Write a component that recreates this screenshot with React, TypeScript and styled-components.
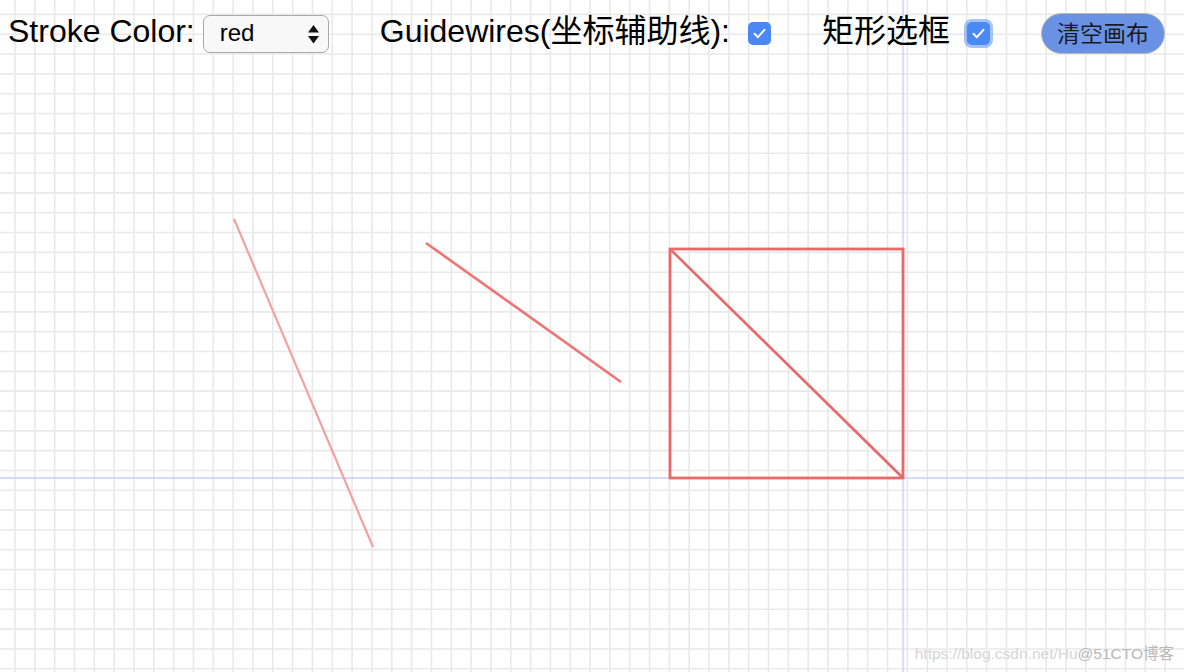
import React from "react";
import styled, { createGlobalStyle } from "styled-components";

const GlobalStyle = createGlobalStyle`
  html, body {
    margin: 0;
    padding: 0;
    background: #ffffff;
    font-family: "Liberation Sans", "Noto Sans CJK SC", sans-serif;
    color: #000;
    overflow: hidden;
  }
`;

const Page = styled.div`
  position: relative;
  width: 1184px;
  height: 672px;
  overflow: hidden;
`;

const Canvas = styled.svg`
  position: absolute;
  left: 0;
  top: 0;
  width: 1184px;
  height: 672px;
  z-index: 0;
`;

const Toolbar = styled.div`
  position: relative;
  z-index: 1;
  display: flex;
  align-items: center;
  gap: 51px;
  padding: 13px 8px 0 8px;
`;

const Group = styled.div<{ $gap: number }>`
  display: flex;
  align-items: center;
  gap: ${(p) => p.$gap}px;
`;

const Label = styled.span`
  font-family: "Liberation Sans", "Noto Sans CJK SC", sans-serif;
  font-size: 32px;
  line-height: 32px;
  padding-bottom: 6px;
  color: #000;
  white-space: nowrap;
`;

const SelectWrap = styled.div`
  position: relative;
  width: 126px;
  height: 38px;
`;

const Select = styled.select`
  appearance: none;
  -webkit-appearance: none;
  width: 126px;
  height: 38px;
  box-sizing: border-box;
  border: 1.5px solid #a9a9a9;
  border-radius: 7px;
  background: #f8f8f8;
  font-family: "Liberation Sans", sans-serif;
  font-size: 24px;
  color: #000;
  padding: 0 0 2px 16px;
  outline: none;
`;

const Arrows = styled.svg`
  position: absolute;
  right: 10px;
  top: 10px;
  pointer-events: none;
`;

const Box = styled.span<{ $focus?: boolean }>`
  display: inline-flex;
  align-items: center;
  justify-content: center;
  width: 23px;
  height: 23px;
  border-radius: 5px;
  background: #4a89f3;
  box-shadow: ${(p) =>
    p.$focus ? "0 0 0 3px rgba(90, 145, 240, 0.55)" : "none"};
`;

const ClearButton = styled.button`
  width: 124px;
  height: 41px;
  box-sizing: border-box;
  border: 1.5px solid #b9b9b9;
  border-radius: 21px;
  background: #6a92e4;
  color: #1a1a26;
  font-family: "Noto Sans CJK SC", sans-serif;
  font-size: 23px;
  line-height: 1;
  padding: 0 0 2px 0;
  cursor: pointer;
`;

const Watermark = styled.div`
  position: absolute;
  right: 10px;
  bottom: 9px;
  z-index: 1;
  font-family: "Liberation Sans", "Noto Sans CJK SC", sans-serif;
  font-size: 15.5px;
  line-height: 18px;
  white-space: nowrap;
`;

const WmLight = styled.span`
  color: #d5d5d5;
`;

const WmDark = styled.span`
  color: #b8b8b8;
  text-shadow: 0 0 1px #ffffff;
`;

const Check = () => (
  <svg width="13" height="11" viewBox="0 0 13 11">
    <path
      d="M1.5 5.8 L4.9 9.2 L11.5 1.8"
      fill="none"
      stroke="#ffffff"
      strokeWidth="2"
      strokeLinecap="round"
      strokeLinejoin="round"
    />
  </svg>
);

const STEP = 19.83;
const vLines = Array.from({ length: 60 }, (_, i) => 15 + i * STEP);
const hLines = Array.from({ length: 34 }, (_, i) => 14.4 + i * STEP);

export default function App() {
  return (
    <>
      <GlobalStyle />
      <Page>
        <Canvas viewBox="0 0 1184 672">
          {vLines.map((x) => (
            <line
              key={"v" + x}
              x1={x}
              y1={0}
              x2={x}
              y2={672}
              stroke="#e9e9e9"
              strokeWidth={1.6}
            />
          ))}
          {hLines.map((y) => (
            <line
              key={"h" + y}
              x1={0}
              y1={y}
              x2={1184}
              y2={y}
              stroke="#e9e9e9"
              strokeWidth={1.6}
            />
          ))}
          <line x1={903} y1={0} x2={903} y2={672} stroke="#c9cefb" strokeWidth={1.3} />
          <line x1={0} y1={478} x2={1184} y2={478} stroke="#c9cefb" strokeWidth={1.3} />
          <line x1={234} y1={219} x2={373} y2={547} stroke="#f3a0a0" strokeWidth={2.2} />
          <line x1={426} y1={243} x2={621} y2={382} stroke="#ef7474" strokeWidth={2.6} />
          <rect
            x={670}
            y={249}
            width={233}
            height={229}
            fill="none"
            stroke="#e96868"
            strokeWidth={2.8}
          />
          <line x1={670} y1={249} x2={903} y2={478} stroke="#e96868" strokeWidth={2.6} />
        </Canvas>

        <Toolbar>
          <Group $gap={8}>
            <Label>Stroke Color:</Label>
            <SelectWrap>
              <Select defaultValue="red">
                <option value="red">red</option>
                <option value="green">green</option>
                <option value="blue">blue</option>
              </Select>
              <Arrows width="11" height="19" viewBox="0 0 11 19">
                <path d="M5.5 0 L11 7.5 L0 7.5 Z" fill="#111" />
                <path d="M0 11 L11 11 L5.5 18.5 Z" fill="#111" />
              </Arrows>
            </SelectWrap>
          </Group>
          <Group $gap={18}>
            <Label>Guidewires(坐标辅助线):</Label>
            <Box>
              <Check />
            </Box>
          </Group>
          <Group $gap={17}>
            <Label>矩形选框</Label>
            <Box $focus>
              <Check />
            </Box>
          </Group>
          <ClearButton>清空画布</ClearButton>
        </Toolbar>

        <Watermark>
          <WmLight>https://blog.csdn.net/Hu</WmLight>
          <WmDark>@51CTO博客</WmDark>
        </Watermark>
      </Page>
    </>
  );
}
